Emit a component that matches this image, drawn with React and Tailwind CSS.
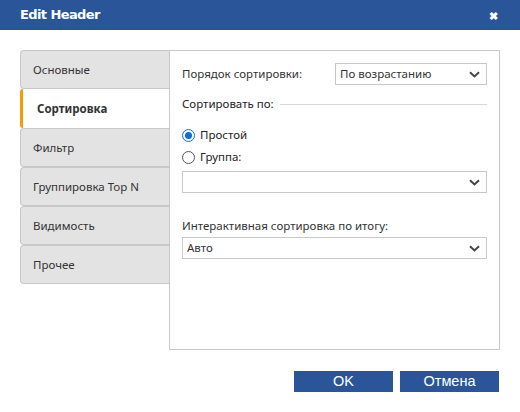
import React from "react";

const tabs = ["Основные", "Сортировка", "Фильтр", "Группировка Top N", "Видимость", "Прочее"];

const Chevron = () => (
  <svg width="11" height="7" viewBox="0 0 11 7" className="shrink-0">
    <path d="M1 1.2 L5.5 5.4 L10 1.2" fill="none" stroke="#444" strokeWidth="2" />
  </svg>
);

const Select = ({ value, className = "" }) => (
  <div
    className={`h-[22px] border border-[#c8c8c8] bg-white flex items-center justify-between pl-[4px] pr-[6px] text-[11.5px] text-[#333] ${className}`}
  >
    <span>{value}</span>
    <Chevron />
  </div>
);

const Radio = ({ checked, label }) => (
  <div className="flex items-center h-[22px] gap-[5px]">
    {checked ? (
      <span className="w-[13px] h-[13px] rounded-full border border-[#0a6fd6] flex items-center justify-center">
        <span className="w-[7px] h-[7px] rounded-full bg-[#0a6fd6]" />
      </span>
    ) : (
      <span className="w-[13px] h-[13px] rounded-full border border-[#555]" />
    )}
    <span className="text-[11.5px] text-[#222]">{label}</span>
  </div>
);

export default function App() {
  return (
    <div className="w-[520px] h-[412px] bg-white font-['Noto_Sans',sans-serif] overflow-hidden">
      <div className="h-[30px] bg-[#2a5699] flex items-center justify-between pl-[20px] pr-[22px]">
        <span className="text-white font-bold text-[13px] font-['DejaVu_Sans',sans-serif] tracking-[-0.6px]">
          Edit Header
        </span>
        <span className="text-white font-bold text-[11px] leading-none">✖</span>
      </div>

      <div className="flex pl-[20px] pt-[20px]">
        <div className="w-[149px] flex flex-col">
          {tabs.map((t, i) =>
            i === 1 ? (
              <div
                key={t}
                className="h-[39px] bg-white border-l-[3px] border-[#f59c00] rounded-l-[3px] flex items-center pl-[14px] text-[11.5px] font-bold text-[#333]"
              >
                {t}
              </div>
            ) : (
              <div
                key={t}
                className="h-[39px] bg-[#e3e3e3] border border-r-0 border-[#c8c8c8] rounded-l-[4px] flex items-center pl-[12px] text-[11.5px] text-[#333]"
              >
                {t}
              </div>
            )
          )}
        </div>

        <div className="w-[331px] h-[300px] border border-[#c8c8c8] px-[12px] pt-[12px]">
          <div className="flex items-center justify-between">
            <span className="text-[11.5px] text-[#333]">Порядок сортировки:</span>
            <Select value="По возрастанию" className="w-[152px]" />
          </div>

          <div className="flex items-center mt-[8px] h-[22px] gap-[6px]">
            <span className="text-[11.5px] text-[#222]">Сортировать по:</span>
            <div className="flex-1 h-px bg-[#d8d8d8]" />
          </div>

          <div className="mt-[9px] flex flex-col">
            <Radio checked label="Простой" />
            <Radio label="Группа:" />
          </div>

          <Select value="" className="mt-[3px] w-full" />

          <div className="mt-[24px] text-[11.5px] text-[#333] leading-[18px]">
            Интерактивная сортировка по итогу:
          </div>
          <Select value="Авто" className="mt-[2px] w-full" />
        </div>
      </div>

      <div className="flex justify-end gap-[7px] pr-[21px] mt-[21px]">
        <button className="w-[99px] h-[21px] bg-[#2a5699] text-white text-[14.5px] font-['Liberation_Sans',sans-serif] leading-none">
          OK
        </button>
        <button className="w-[99px] h-[21px] bg-[#2a5699] text-white text-[14.5px] font-['Liberation_Sans',sans-serif] leading-none">
          Отмена
        </button>
      </div>
    </div>
  );
}
